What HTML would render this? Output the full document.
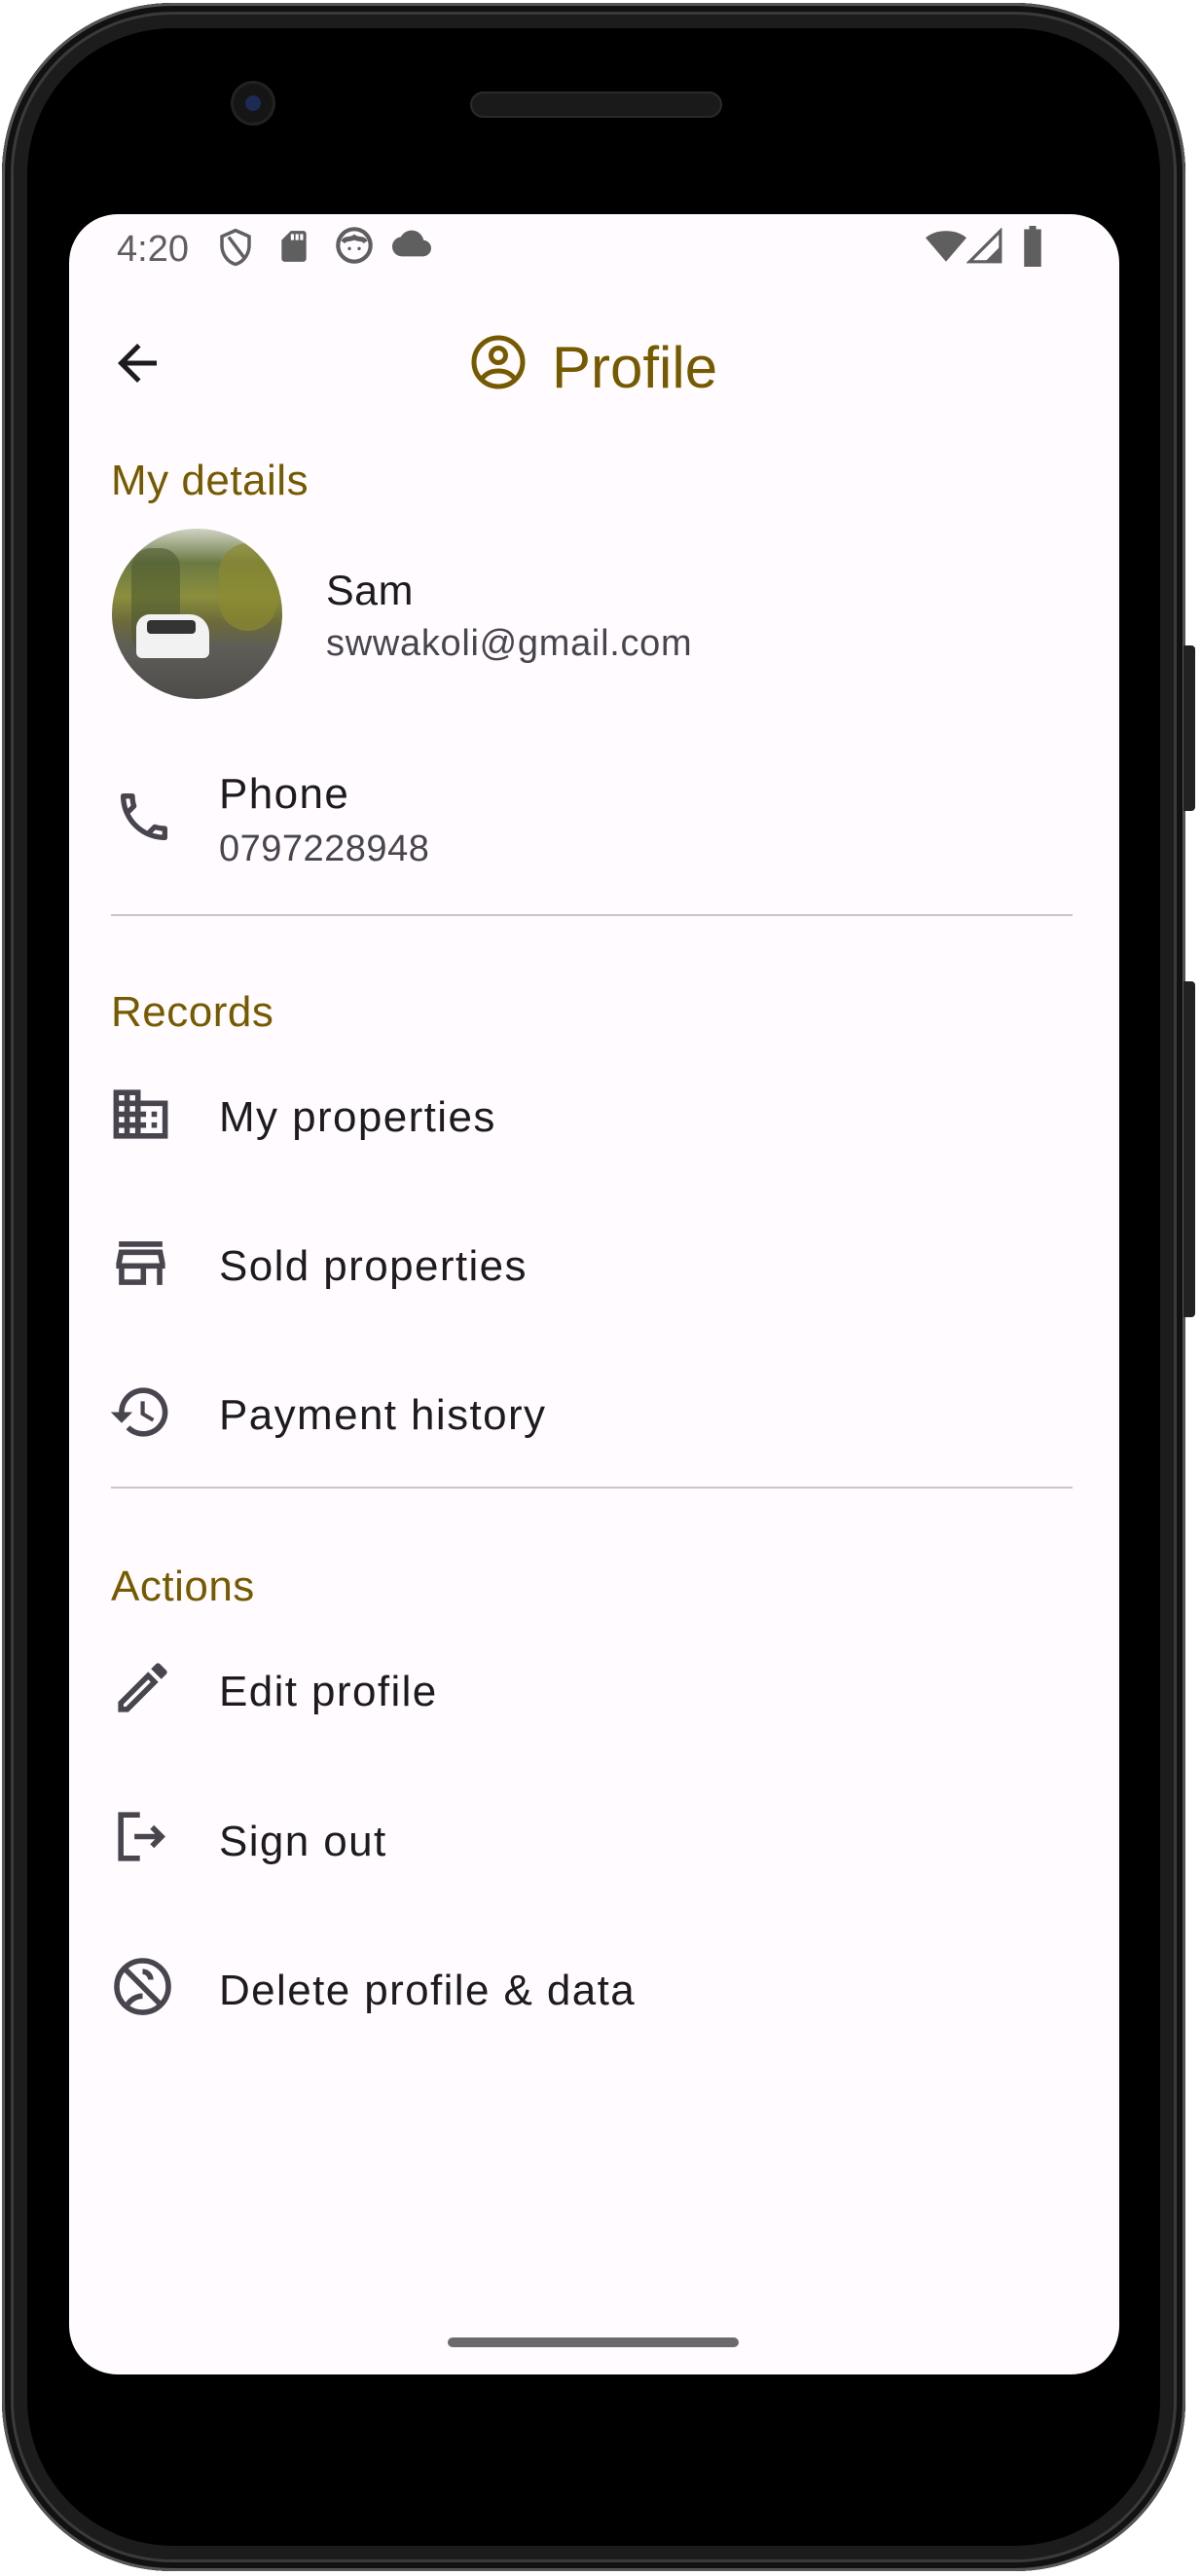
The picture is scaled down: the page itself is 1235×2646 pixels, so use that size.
<!DOCTYPE html>
<html><head><meta charset="utf-8"><style>
*{margin:0;padding:0;box-sizing:border-box}
html,body{width:1235px;height:2646px;background:#fff;overflow:hidden;font-family:"Liberation Sans",Roboto,sans-serif}
.body{position:absolute;left:2px;top:3px;width:1216px;height:2638px;border-radius:175px;background:#1c1c1c;box-shadow:inset 0 0 0 3px #555,inset 0 0 0 9px #111,inset 0 0 0 12px #3a3a3a}
.inner{position:absolute;left:26px;top:26px;right:26px;bottom:26px;border-radius:150px;background:#000}
.btn{position:absolute;left:1216px;width:12px;background:#222;border-radius:0 4px 4px 0}
.screen{position:absolute;left:71px;top:220px;width:1079px;height:2219px;background:#fffbfe;border-radius:50px;overflow:hidden}
.t{position:absolute;white-space:nowrap;line-height:1}
.gold{color:#765a00}
.dark{color:#1d1b20}
.sub{color:#49454f}
.item{font-size:44px;letter-spacing:1.4px}
.hdr{font-size:44px;letter-spacing:0.5px}
.ic{position:absolute;fill:#49454f}
.div{position:absolute;left:43px;width:988px;height:2px;background:#cac4d0}
</style></head><body>
<div class="body"><div class="inner"></div></div>
<div class="btn" style="top:663px;height:170px"></div>
<div class="btn" style="top:1008px;height:345px"></div>
<div style="position:absolute;left:240px;top:86px;width:40px;height:40px;border-radius:50%;background:#151515;box-shadow:0 0 0 3px #222"></div>
<div style="position:absolute;left:252px;top:98px;width:16px;height:16px;border-radius:50%;background:#1d2a55"></div>
<div style="position:absolute;left:483px;top:94px;width:259px;height:27px;border-radius:14px;background:#1a1a1a;box-shadow:inset 0 0 0 2px #2a2a2a"></div>

<div class="screen">
 <div class="t" style="left:49px;top:17px;font-size:38px;color:#5f5f5f">4:20</div>
 <svg class="ic" style="left:150px;top:12px;fill:#5f5f5f" width="42" height="44" viewBox="0 0 24 24"><path d="M12 1L3 5v6c0 5.55 3.84 10.74 9 12 5.16-1.26 9-6.45 9-12V5l-9-4zm7 10c0 4.52-2.98 8.69-7 9.93-4.02-1.24-7-5.41-7-9.93V6.3l7-3.11 7 3.11V11z"/><path d="M8 6l9 12" stroke="#5f5f5f" stroke-width="2"/></svg>
 <svg class="ic" style="left:212px;top:12px;fill:#5f5f5f" width="38" height="42" viewBox="0 0 24 24"><path d="M18 2h-8L4 8v12c0 1.1.9 2 2 2h12c1.1 0 2-.9 2-2V4c0-1.1-.9-2-2-2zm-6 6h-2V4h2v4zm3 0h-2V4h2v4zm3 0h-2V4h2v4z"/></svg>
 <svg style="position:absolute;left:273px;top:12px" width="40" height="40" viewBox="0 0 24 24"><circle cx="12" cy="12" r="10" fill="none" stroke="#5f5f5f" stroke-width="2.5"/><path d="M5 10c2-3 4-1 7-3 3 2 5 0 7 3" stroke="#5f5f5f" stroke-width="3" fill="none"/><circle cx="9" cy="14" r="1" fill="#5f5f5f"/><circle cx="15" cy="14" r="1" fill="#5f5f5f"/></svg>
 <svg class="ic" style="left:330px;top:10px;fill:#5f5f5f" width="44" height="40" viewBox="0 0 24 24"><path d="M19.35 10.04C18.67 6.59 15.640 4 12 4 9.11 4 6.6 5.64 5.35 8.04 2.34 8.36 0 10.91 0 14c0 3.31 2.69 6 6 6h13c2.76 0 5-2.24 5-5 0-2.64-2.05-4.78-4.65-4.96z"/></svg>
 <svg class="ic" style="left:878px;top:12px;fill:#5f5f5f" width="46" height="42" viewBox="0 0 24 24"><path d="M12 21L0 7c3.3-2.8 7.5-4 12-4s8.7 1.2 12 4L12 21z"/></svg>
 <svg class="ic" style="left:922px;top:14px;fill:none" width="38" height="38" viewBox="0 0 24 24"><path d="M2 22L22 2v20z" stroke="#5f5f5f" stroke-width="2"/><path d="M12 22L22 12v10z" fill="#5f5f5f"/></svg>
 <svg class="ic" style="left:978px;top:12px;fill:#5f5f5f" width="24" height="42" viewBox="0 0 12 24"><path d="M4 0h4v2h3v22H1V2h3z"/></svg>

 <svg class="ic" style="left:40px;top:123px;fill:#1d1b20" width="60" height="60" viewBox="0 0 24 24"><path d="M20 11H7.83l5.59-5.59L12 4l-8 8 8 8 1.41-1.41L7.83 13H20v-2z"/></svg>
 <svg style="position:absolute;left:413px;top:124px" width="56" height="56" viewBox="0 0 56 56"><circle cx="28" cy="28" r="25" fill="none" stroke="#765a00" stroke-width="5"/><circle cx="28" cy="21" r="7.5" fill="none" stroke="#765a00" stroke-width="5"/><path d="M11 45c5-6 10-8 17-8s12 2 17 8" fill="none" stroke="#765a00" stroke-width="5"/></svg>
 <div class="t gold" style="left:496px;top:128px;font-size:60px">Profile</div>

 <div class="t gold hdr" style="left:43px;top:252px">My details</div>
 <div style="position:absolute;left:44px;top:323px;width:175px;height:175px;border-radius:50%;overflow:hidden;background:linear-gradient(180deg,#cfd3c4 0%,#6c7a43 20%,#8a8e3c 40%,#6b6a3a 55%,#5e5d58 70%,#4d4c4a 100%)">
  <div style="position:absolute;left:20px;top:20px;width:50px;height:110px;background:#4f5a30;opacity:.6;border-radius:20px"></div>
  <div style="position:absolute;left:110px;top:15px;width:60px;height:90px;background:#8c8a30;opacity:.7;border-radius:30px"></div>
  <div style="position:absolute;left:25px;top:88px;width:75px;height:45px;background:#f2f2f2;border-radius:14px 20px 6px 6px"></div>
  <div style="position:absolute;left:36px;top:94px;width:50px;height:14px;background:#333;border-radius:4px"></div>
 </div>
 <div class="t dark" style="left:264px;top:366px;font-size:43px;letter-spacing:.5px">Sam</div>
 <div class="t sub" style="left:264px;top:422px;font-size:38px;letter-spacing:.7px">swwakoli@gmail.com</div>

 <svg class="ic" style="left:45px;top:587px" width="64" height="64" viewBox="0 0 24 24"><path d="M6.54 5c.06.89.21 1.76.45 2.59l-1.2 1.2c-.41-1.2-.67-2.47-.76-3.79h1.51m9.86 12.02c.85.24 1.72.39 2.6.45v1.49c-1.32-.09-2.59-.35-3.8-.75l1.2-1.19M7.5 3H4c-.55 0-1 .45-1 1 0 9.39 7.61 17 17 17 .55 0 1-.45 1-1v-3.49c0-.55-.45-1-1-1-1.24 0-2.45-.2-3.57-.57-.1-.04-.21-.05-.31-.05-.26 0-.51.1-.71.29l-2.2 2.2c-2.83-1.45-5.15-3.76-6.59-6.59l2.2-2.2c.28-.28.36-.67.25-1.02C8.7 6.45 8.5 5.25 8.5 4c0-.55-.45-1-1-1z"/></svg>
 <div class="t dark item" style="left:154px;top:574px">Phone</div>
 <div class="t sub" style="left:154px;top:633px;font-size:38px;letter-spacing:.5px">0797228948</div>
 <div class="div" style="top:719px"></div>

 <div class="t gold hdr" style="left:43px;top:798px">Records</div>
 <svg class="ic" style="left:40px;top:891px" width="67" height="67" viewBox="0 0 24 24"><path d="M12 7V3H2v18h20V7H12zM6 19H4v-2h2v2zm0-4H4v-2h2v2zm0-4H4V9h2v2zm0-4H4V5h2v2zm4 12H8v-2h2v2zm0-4H8v-2h2v2zm0-4H8V9h2v2zm0-4H8V5h2v2zm10 12h-8v-2h2v-2h-2v-2h2v-2h-2V9h8v10zm-2-8h-2v2h2v-2zm0 4h-2v2h2v-2z"/></svg>
 <div class="t dark item" style="left:154px;top:906px">My properties</div>
 <svg class="ic" style="left:40px;top:1044px" width="67" height="67" viewBox="0 0 24 24"><path d="M18.36 9l.6 3H5.04l.6-3h12.72M20 4H4v2h16V4zm0 3H4l-1 5v2h1v6h10v-6h4v6h2v-6h1v-2l-1-5zM6 18v-4h6v4H6z"/></svg>
 <div class="t dark item" style="left:154px;top:1059px">Sold properties</div>
 <svg class="ic" style="left:40px;top:1197px" width="67" height="67" viewBox="0 0 24 24"><path d="M13 3c-4.97 0-9 4.03-9 9H1l3.89 3.89.07.14L9 12H6c0-3.87 3.13-7 7-7s7 3.13 7 7-3.13 7-7 7c-1.93 0-3.68-.79-4.94-2.06l-1.42 1.42C8.27 19.99 10.51 21 13 21c4.97 0 9-4.03 9-9s-4.03-9-9-9zm-1 5v5l4.28 2.54.72-1.21-3.5-2.08V8H12z"/></svg>
 <div class="t dark item" style="left:154px;top:1212px">Payment history</div>
 <div class="div" style="top:1307px"></div>

 <div class="t gold hdr" style="left:43px;top:1388px">Actions</div>
 <svg class="ic" style="left:42px;top:1480px" width="67" height="67" viewBox="0 0 24 24"><path d="M3 17.25V21h3.75L17.81 9.94l-3.75-3.75L3 17.25zM5.92 19H5v-.92l9.06-9.06.92.92L5.92 19zM20.71 5.63l-2.34-2.34c-.2-.2-.45-.29-.71-.29s-.51.1-.7.29l-1.83 1.83 3.75 3.75 1.83-1.83c.39-.39.39-1.02 0-1.41z"/></svg>
 <div class="t dark item" style="left:154px;top:1496px">Edit profile</div>
 <svg style="position:absolute;left:42px;top:1633px" width="67" height="67" viewBox="0 0 24 24"><path d="M11 4H4v16h7" fill="none" stroke="#49454f" stroke-width="2"/><path d="M9 12h10M15.5 8.5L19 12l-3.5 3.5" fill="none" stroke="#49454f" stroke-width="2"/></svg>
 <div class="t dark item" style="left:154px;top:1650px">Sign out</div>
 <svg style="position:absolute;left:42px;top:1787px" width="67" height="67" viewBox="0 0 24 24"><circle cx="12" cy="12" r="9.5" fill="none" stroke="#49454f" stroke-width="2"/><path d="M5.5 5.5l13 13" stroke="#49454f" stroke-width="2"/><path d="M6.5 18.5c1.5-2 3.5-3 5.5-3" fill="none" stroke="#49454f" stroke-width="2"/><path d="M12 6.5a3 3 0 0 1 3 3" fill="none" stroke="#49454f" stroke-width="2"/></svg>
 <div class="t dark item" style="left:154px;top:1803px">Delete profile &amp; data</div>

 <div style="position:absolute;left:389px;top:2181px;width:299px;height:10px;border-radius:5px;background:#6b6a6e"></div>
</div>
</body></html>
